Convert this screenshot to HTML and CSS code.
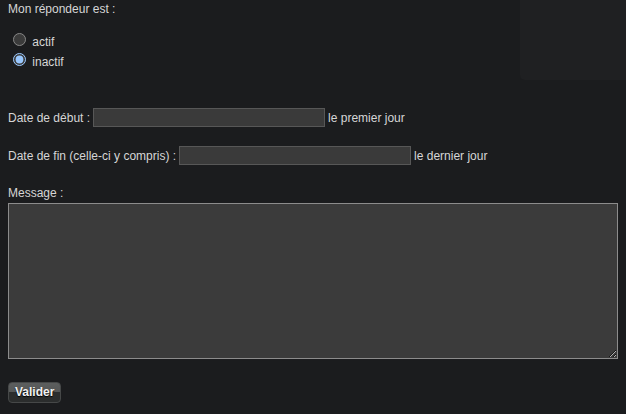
FILE: index.html
```html
<!DOCTYPE html>
<html lang="fr">
<head>
<meta charset="utf-8">
<title>Répondeur</title>
<link rel="stylesheet" href="styles.css">
</head>
<body>
	<div class="sidebox"></div>
	<form class="responder">
		<div class="title">Mon répondeur est :</div>
		<div class="radios">
			<div class="radio"><input type="radio" name="state" id="on"> <label for="on">actif</label></div>
			<div class="radio"><input type="radio" name="state" id="off" checked> <label for="off">inactif</label></div>
		</div>
		<div class="row row-start">
			<span>Date de début :</span>
			<input type="text" class="date">
			<span>le premier jour</span>
		</div>
		<div class="row row-end">
			<span>Date de fin (celle-ci y compris) :</span>
			<input type="text" class="date">
			<span>le dernier jour</span>
		</div>
		<div class="msg-label">Message :</div>
		<textarea class="message"></textarea>
		<div class="actions">
			<button type="button" class="btn">Valider</button>
		</div>
	</form>
</body>
</html>
```
FILE: styles.css
```css
:root {
	color-scheme: dark;
}

body {
	margin: 0;
	background: #1b1c1e;
	color: #d6d6d6;
	font-family: "Liberation Sans", Arial, sans-serif;
	font-size: 12px;
	line-height: 16px;
}

.sidebox {
	position: absolute;
	top: 0;
	right: 0;
	width: 106px;
	height: 80px;
	background: #1f2022;
	border-bottom-left-radius: 5px;
}

.responder {
	padding: 1px 8px 0 8px;
}

.radios {
	margin-top: 13px;
}

.radio {
	height: 20px;
}

.radio input {
	margin: 3px 3px 0 5px;
}

.row {
	display: flex;
	align-items: center;
	gap: 3px;
}

.row-start {
	margin-top: 38px;
}

.row-end {
	margin-top: 19px;
}

.date {
	width: 232px;
	height: 19px;
	box-sizing: border-box;
	margin: 0;
	background: #3a3a3a;
	border: 1px solid #575757;
	color: #ddd;
	font: inherit;
	padding: 0 3px;
}

.msg-label {
	margin-top: 20px;
}

.message {
	display: block;
	box-sizing: border-box;
	width: 610px;
	height: 156px;
	margin: 2px 0 0 0;
	background: #3b3b3b;
	border: 1px solid #8c8c8c;
	color: #ddd;
	font: inherit;
}

.actions {
	margin-top: 23px;
}

.btn {
	height: 21px;
	padding: 0 6px;
	border: 1px solid #464848;
	border-radius: 4px;
	background: linear-gradient(#5c5e5e 0%, #555757 50%, #2b2d2d 50%, #2b2d2d 100%);
	color: #f2f2f2;
	font-family: "Liberation Sans", Arial, sans-serif;
	font-size: 12px;
	font-weight: bold;
	text-shadow: 0 1px 1px #000;
	line-height: 17px;
}
```
